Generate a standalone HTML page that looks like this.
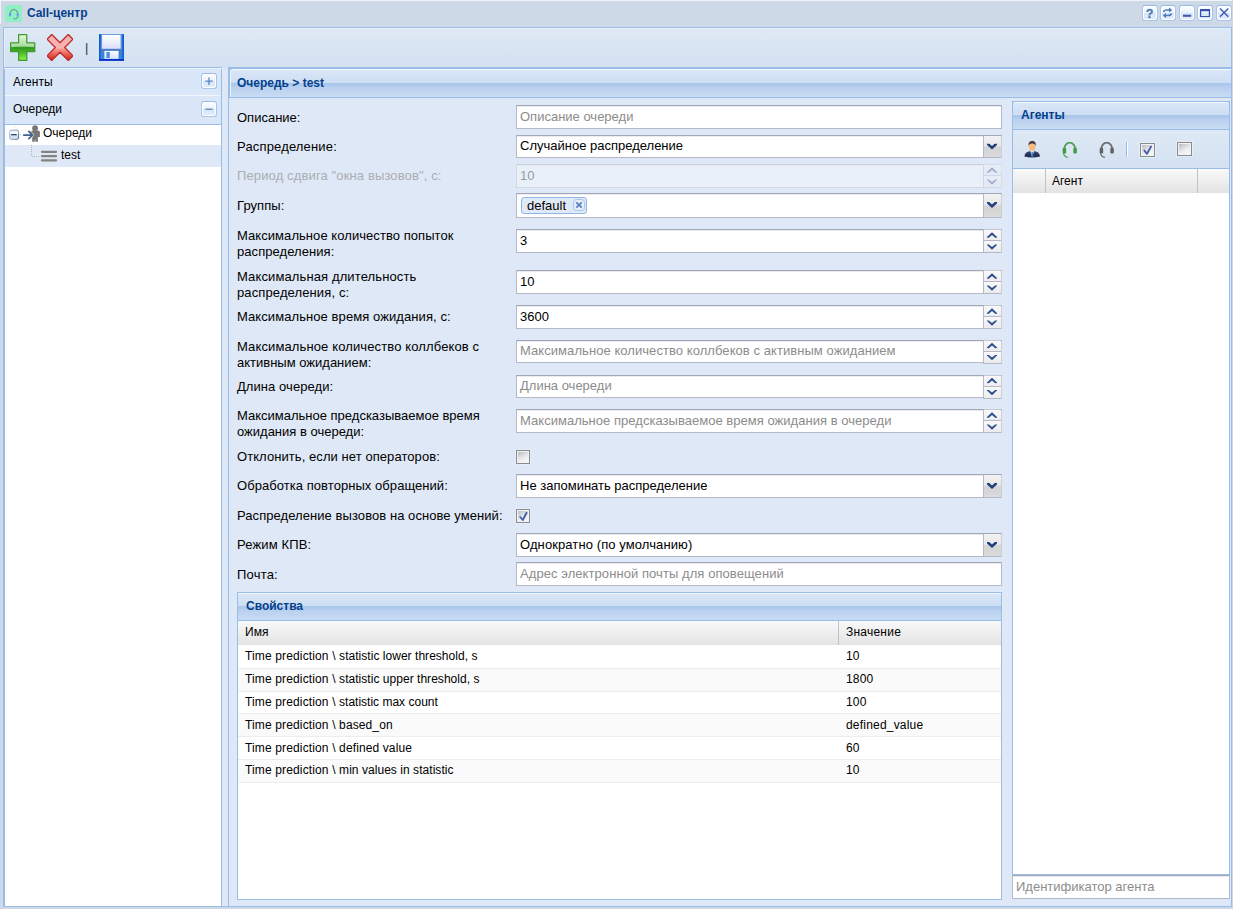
<!DOCTYPE html>
<html><head><meta charset="utf-8"><title>Call-центр</title>
<style>
*{box-sizing:border-box}
html,body{margin:0;padding:0}
body{width:1233px;height:909px;overflow:hidden;position:relative;background:#ced9e7;font:13px/15px "Liberation Sans",Arial,sans-serif;color:#000}
.a{position:absolute}
.t{position:absolute;white-space:nowrap;line-height:15px}
.hd{position:absolute;border:1px solid #99bce8;background:linear-gradient(#dae7f6 0,#cddef3 13px,#abc7ec 13px,#adc8ec 15px,#b8cfee 17px,#c9dcf3 100%);background-clip:padding-box;background-origin:padding-box;box-shadow:inset 0 1px 0 #f4f8fd}
.hd span{position:absolute;font:bold 12px/15px "Liberation Sans",Arial,sans-serif;color:#04408c;white-space:nowrap}
.lbl{position:absolute;left:237px;width:280px;line-height:16px;white-space:nowrap}
.f{position:absolute;left:516px;width:486px;height:24px;border:1px solid #b5b8c8;border-top-color:#a1a6b9;background:#fff;box-shadow:inset 0 1px 0 #ececf0}
.f span{position:absolute;left:3px;top:3px;line-height:15px;white-space:nowrap}
.ph span{color:#8c8c8c}
.trg{position:absolute;right:-1px;top:-1px;bottom:-1px;width:19px;border:1px solid;border-color:#a1a6b9 #cdced6 #b5b8c8 #b5b8c8;border-radius:0 2px 0 0;background:linear-gradient(#f3f3f3 0,#e7e7e7 47%,#d3d3d3 53%,#dbdbdb 100%)}
.h23 .spn{bottom:-2px}
.gh{position:absolute;background:linear-gradient(#f9f9f9,#e4e3e4)}
.row{position:absolute;left:238px;width:763px;height:23px;border-top:1px solid #ededed;font-size:12px}
.row span{position:absolute;top:3px;line-height:15px;white-space:nowrap}
.alt{background:#fafafa}
.tool{position:absolute;width:15px;height:15px;border:1px solid #a9c4ea;border-top-color:#98b9e6;border-radius:3px;background:linear-gradient(#fdfeff,#eaf2fc 48%,#d6e5f9 52%,#e4eefb);box-shadow:inset 0 0 0 1px #fff}

.trg svg{position:absolute;left:0;top:0}
.cb{position:absolute;width:14px;height:14px;border:1px solid #8b8b8b;background:linear-gradient(150deg,#bfc3cb 15%,#ececee 55%,#f6f6f6 85%);box-shadow:inset 0 0 0 1px #f3f3f3,0 0 0 1px rgba(226,238,253,.9)}
.tool svg{position:absolute;left:-1px;top:-1px}
.h23{height:23px}.h23 span{top:2px}
.spn{background:linear-gradient(#f9f9f9,#ececec 50%,#f9f9f9 50%,#ebebeb);border-top-color:#c6c8d2}.spn i{position:absolute;left:0;right:0;top:10px;height:1px;background:#b5b8c8}
.row b{font-weight:normal;letter-spacing:.14px}.row i{font-style:normal}
.r1 span{top:4px}
</style></head><body>
<svg width="0" height="0" style="position:absolute">
<defs>
<linearGradient id="gPlus" x1="0" y1="0" x2="0" y2="1"><stop offset="0" stop-color="#d9f2d4"/><stop offset=".47" stop-color="#86cc78"/><stop offset=".5" stop-color="#2f9620"/><stop offset=".75" stop-color="#56c233"/><stop offset="1" stop-color="#8cf54e"/></linearGradient>
<linearGradient id="gX" x1="0" y1="0" x2="0" y2="1"><stop offset="0" stop-color="#f0b4b4"/><stop offset=".5" stop-color="#fab2ae"/><stop offset=".62" stop-color="#f48a80"/><stop offset="1" stop-color="#d21f10"/></linearGradient>
<linearGradient id="gSv" x1="0" y1="0" x2="0" y2="1"><stop offset="0" stop-color="#1a6fe0"/><stop offset=".5" stop-color="#4a7cc6"/><stop offset="1" stop-color="#2a8ae8"/></linearGradient>
<linearGradient id="gSvL" x1="0" y1="0" x2="0" y2="1"><stop offset="0" stop-color="#ffffff"/><stop offset="1" stop-color="#dadffb"/></linearGradient>
<symbol id="chev2" viewBox="0 0 10 6"><path d="M0 0.4 L1.8 0.4 L5 3.1 L8.2 0.4 L10 0.4 L10 1.1 L5 5.8 L0 1.1 Z"/></symbol>
<symbol id="chev" viewBox="0 0 10 6"><path d="M0 0 L2.2 0 L5 2.6 L7.8 0 L10 0 L10 1.5 L5 6 L0 1.5 Z"/></symbol>
<symbol id="hs" viewBox="0 0 16 17"><path d="M2.3 8 A5.7 6.9 0 0 1 13.7 8" fill="none" stroke-width="1.9" stroke="currentColor" opacity=".9"/><rect x=".7" y="6.4" width="3.6" height="6" rx="1.3" fill="currentColor"/><rect x="11.7" y="6.4" width="3.6" height="6" rx="1.3" fill="currentColor"/><path d="M1.6 11.8 Q2 15.4 5.6 16.3" fill="none" stroke="currentColor" stroke-width="1.3" stroke-linecap="round" opacity=".9"/><rect x="4.8" y="8.6" width="6.4" height="4.4" fill="#e8ecf0" opacity=".5"/></symbol>
</defs></svg>

<!-- window header -->
<div class="a" style="left:0;top:0;width:1232px;height:1px;background:#f1f4fa"></div>
<div class="a" style="left:0;top:0;width:1px;height:24px;background:#f1f4fa"></div>
<svg class="a" style="left:5px;top:5px" width="17" height="17" viewBox="0 0 17 17"><rect width="17" height="17" rx="3" fill="#8ff0c2"/><path d="M5.2 9 A3.6 4.2 0 0 1 12.6 9" fill="none" stroke="#6f7f86" stroke-width="1"/><rect x="3.9" y="8" width="2.3" height="3.6" rx="1" fill="#6a9cf2"/><rect x="11.6" y="8" width="2.3" height="3.6" rx="1" fill="#6a9cf2"/><path d="M12.8 11.4 Q12.6 13.6 10.2 13.8" fill="none" stroke="#6f7f86" stroke-width=".9"/><rect x="8.2" y="13.2" width="2" height="1.1" rx=".5" fill="#4f8ff0"/></svg>
<div class="t" style="left:27px;top:6px;font:bold 12px/15px 'Liberation Sans',Arial,sans-serif;color:#04408c">Call-центр</div>
<div class="tool" style="left:1142px;top:5px;height:16px;width:16px"><svg width="15" height="15" viewBox="0 0 15 15"><text x="7.5" y="12.8" text-anchor="middle" font-family="'Liberation Sans',Arial,sans-serif" font-weight="bold" font-size="12.5" fill="#4a79b3" stroke="#4a79b3" stroke-width=".3">?</text></svg></div>
<div class="tool" style="left:1160px;top:5px;height:16px;width:16px"><svg width="15" height="15" viewBox="0 0 15 15"><g fill="none" stroke="#4a79b3" stroke-width="1.5"><path d="M3.5 7 Q4 5 7 5 H9.5"/><path d="M11.5 8.5 Q11 10.5 8 10.5 H5.5"/></g><path d="M9 2.4 L12.2 5 L9 7.6 Z" fill="#4a79b3"/><path d="M6 7.9 L2.8 10.5 L6 13.1 Z" fill="#4a79b3"/></svg></div>
<div class="tool" style="left:1179px;top:5px;height:16px;width:16px"><svg width="15" height="15" viewBox="0 0 15 15"><rect x="4" y="9.7" width="8.2" height="2.1" fill="#4357a8"/></svg></div>
<div class="tool" style="left:1197px;top:5px;height:16px;width:16px"><svg width="15" height="15" viewBox="0 0 15 15"><path d="M3 4 H13 V12 H3 Z M4.2 6.2 V10.9 H11.8 V6.2 Z" fill="#3850aa" fill-rule="evenodd"/></svg></div>
<div class="tool" style="left:1216px;top:5px;height:16px;width:16px"><svg width="15" height="15" viewBox="0 0 15 15"><path d="M4 3.6 L12.3 11.8 M12.3 3.6 L4 11.8" stroke="#4357a8" stroke-width="1.35" fill="none"/></svg></div>

<!-- window body -->
<div class="a" style="left:3px;top:27px;width:1229px;height:880px;border:1px solid #99bce8;background:#dfe8f6"></div>
<!-- toolbar -->
<div class="a" style="left:3px;top:27px;width:1229px;height:41px;border:1px solid #99bce8;background:linear-gradient(#dfe9f5,#d3e1f1);box-shadow:inset 1px 1px 0 #e8eef8"></div>
<div class="a" style="left:4px;top:68px;width:1227px;height:1px;background:#eef3fb"></div>
<div class="t" style="left:85px;top:40px;font-size:13px;color:#333">|</div>


<!-- toolbar icons -->
<svg class="a" style="left:9px;top:33px" width="28" height="29" viewBox="0 0 28 29">
<path d="M9.6 1.7 H17.8 V9.8 H25.8 V18.6 H17.8 V27.4 H9.6 V18.6 H1.6 V9.8 H9.6 Z" fill="url(#gPlus)" stroke="#3d9a2c" stroke-width="1.2" stroke-linejoin="round"/>
<path d="M2.4 10.6 H10.4 V2.6 H17 V10.6 H25 V14.2 Q13.7 10.6 2.4 14.6 Z" fill="#fff" opacity=".28"/>
</svg>
<svg class="a" style="left:47px;top:34px" width="26" height="27" viewBox="0 0 26 27">
<path d="M4.73 0.56 L13.00 8.83 L21.27 0.56 L25.94 5.23 L17.67 13.50 L25.94 21.77 L21.27 26.44 L13.00 18.17 L4.73 26.44 L0.06 21.77 L8.33 13.50 L0.06 5.23 Z" fill="url(#gX)" stroke="#c12a2c" stroke-width="1.3" stroke-linejoin="round"/>
</svg>
<svg class="a" style="left:98px;top:33px" width="28" height="29" viewBox="0 0 28 29">
<rect x="1" y="1.2" width="25" height="26.6" fill="url(#gSv)"/>
<rect x="1" y="1.2" width="1.6" height="26.6" fill="#0f5fd6"/><rect x="24.4" y="1.2" width="1.6" height="26.6" fill="#0f5fd6"/>
<rect x="1" y="26" width="25" height="1.8" fill="#0a2fc4"/>
<rect x="4" y="1.8" width="18.8" height="14" fill="url(#gSvL)"/>
<rect x="3.2" y="1.8" width=".9" height="14" fill="#7aa0dc"/><rect x="22.7" y="1.8" width=".9" height="14" fill="#7aa0dc"/>
<rect x="6.4" y="17.9" width="14.2" height="8" fill="url(#gSvL)"/>
<rect x="8.4" y="19" width="3.4" height="6" fill="#4a8fe0"/>
</svg>

<!-- left accordion -->
<div class="a" style="left:4px;top:69px;width:218px;height:837px;border:1px solid #99bce8;border-top:0;border-bottom:0;background:#fff"></div>
<div class="a" style="left:5px;top:69px;width:216px;height:26px;background:#d9e7f8"></div>
<div class="a" style="left:5px;top:95px;width:216px;height:1px;background:#f3f7fb"></div>
<div class="a" style="left:5px;top:96px;width:216px;height:28px;background:#d9e7f8"></div>
<div class="a" style="left:5px;top:124px;width:216px;height:1px;background:#99bce8"></div>
<div class="t" style="left:13px;top:75px;font-size:12px">Агенты</div>
<div class="t" style="left:13px;top:102px;font-size:12px">Очереди</div>
<div class="tool" style="left:201px;top:73px;width:16px;height:16px"><svg width="16" height="16" viewBox="-0.5 -0.5 16 16"><path d="M7.5 4 V11.4 M3.8 7.7 H11.2" stroke="#5a86be" stroke-width="1.3" fill="none"/></svg></div>
<div class="tool" style="left:201px;top:101px;width:16px;height:16px"><svg width="16" height="16" viewBox="-0.5 -0.5 16 16"><path d="M3.8 7.7 H11.2" stroke="#5a86be" stroke-width="1.3" fill="none"/></svg></div>
<!-- tree -->
<div class="a" style="left:5px;top:145px;width:216px;height:22px;background:#dfe8f6"></div>
<svg class="a" style="left:5px;top:125px" width="60" height="42" viewBox="5 125 60 42">
<defs><linearGradient id="gEx" x1="0" y1="0" x2="0" y2="1"><stop offset="0" stop-color="#d5dff0"/><stop offset=".3" stop-color="#ffffff"/><stop offset=".5" stop-color="#f4f8fe"/><stop offset=".55" stop-color="#cfdcf2"/><stop offset="1" stop-color="#dfe9f8"/></linearGradient>
<linearGradient id="gExB" x1="0" y1="0" x2="1" y2="1"><stop offset="0" stop-color="#b9c8e0"/><stop offset=".5" stop-color="#9fb3d3"/><stop offset="1" stop-color="#4f6a90"/></linearGradient></defs>
<path d="M14.5 125 V129" stroke="#e2e2e2" stroke-width="1" stroke-dasharray="1 1"/>
<rect x="9.7" y="130.1" width="8.8" height="9.2" rx="1.8" fill="url(#gEx)" stroke="url(#gExB)" stroke-width="1.1"/>
<rect x="11" y="133.9" width="5.8" height="1.4" rx=".5" fill="#2c4466"/>
<rect x="20" y="134.2" width="1" height="1" fill="#b8b8b8"/>
<path d="M23.1 135.05 H32 M28.4 131 L32.6 135.05 L28.4 139.1" fill="none" stroke="#40648c" stroke-width="1.8"/>
<g fill="#767676"><circle cx="35.05" cy="128.15" r="2.85"/><path d="M32.6 130.6 H38.4 Q39.9 130.8 39.9 132.4 V137 H37.9 V141.8 H35.5 L35.1 138.4 L34.7 141.8 H32.2 V137.6 L34.3 135.05 L32.2 132.6 L31.3 133 V132 Q31.4 130.8 32.6 130.6 Z"/></g>
<path d="M31.5 145 V156.5 H39" fill="none" stroke="#b4b4b4" stroke-width="1" stroke-dasharray="1 1"/>
<g fill="#828282"><rect x="41" y="150.7" width="16" height="2.2" rx=".8"/><rect x="41" y="155" width="16" height="2.2" rx=".8"/><rect x="41" y="159.3" width="16" height="2.2" rx=".8"/></g>
</svg>
<div class="t" style="left:43px;top:126px;font-size:12px">Очереди</div>
<div class="t" style="left:61px;top:148px;font-size:12px">test</div>

<!-- main panel -->
<div class="a" style="left:228px;top:68px;width:1003px;height:839px;border:1px solid #99bce8;border-right:0;background:#dfe8f6"></div>
<div class="a" style="left:222px;top:67px;width:6px;height:2px;background:#d9e5f4"></div>
<div class="hd" style="left:228px;top:68px;width:1003px;height:30px;border-radius:4px 0 0 0;border-right:0;box-shadow:inset 1px 0 0 #99bce8,inset 2px 0 0 #edf3fb,inset 0 1px 0 #f4f8fd;background-image:linear-gradient(#dae7f6 0,#cddef3 14px,#abc7ec 14px,#adc8ec 16px,#b8cfee 18px,#c9dcf3 100%)"><span style="left:8px;top:7px">Очередь &gt; test</span></div>

<!-- form labels -->
<div class="lbl" style="top:110px">Описание:</div>
<div class="lbl" style="top:139px;letter-spacing:.16px">Распределение:</div>
<div class="lbl" style="top:168px;color:#a9adb5;letter-spacing:.13px">Период сдвига "окна вызовов", с:</div>
<div class="lbl" style="top:198px;letter-spacing:.07px">Группы:</div>
<div class="lbl" style="top:228px;letter-spacing:.06px">Максимальное количество попыток<br>распределения:</div>
<div class="lbl" style="top:269px;letter-spacing:.12px">Максимальная длительность<br>распределения, с:</div>
<div class="lbl" style="top:309px;letter-spacing:.08px">Максимальное время ожидания, с:</div>
<div class="lbl" style="top:339px"><span style="letter-spacing:.125px">Максимальное количество коллбеков с</span><br>активным ожиданием:</div>
<div class="lbl" style="top:379px;letter-spacing:.065px">Длина очереди:</div>
<div class="lbl" style="top:408px">Максимальное предсказываемое время<br>ожидания в очереди:</div>
<div class="lbl" style="top:449px;letter-spacing:.07px">Отклонить, если нет операторов:</div>
<div class="lbl" style="top:478px;letter-spacing:.055px">Обработка повторных обращений:</div>
<div class="lbl" style="top:508px;letter-spacing:.065px">Распределение вызовов на основе умений:</div>
<div class="lbl" style="top:537px;letter-spacing:.13px">Режим КПВ:</div>
<div class="lbl" style="top:567px;letter-spacing:.2px">Почта:</div>

<!-- fields -->
<div class="f ph" style="top:105px"><span>Описание очереди</span></div>
<div class="f h23" style="top:135px"><span>Случайное распределение</span><div class="trg"><svg width="17" height="21"><use href="#chev" x="3" y="7.5" width="10" height="6" fill="#1f3f7f"/></svg></div></div>
<div class="f" style="top:164px;opacity:.35"><span>10</span><div class="trg spn"><i></i><svg width="17" height="22"><use href="#chev2" x="3" y="-8.1" width="10" height="6" fill="#2b4a8e" transform="scale(1,-1)"/><use href="#chev2" x="3" y="14" width="10" height="6" fill="#2b4a8e"/></svg></div></div>
<div class="f" style="top:193px;height:25px"><div class="a" style="left:4px;top:3px;width:66px;height:17px;border:1px solid #8fb5ea;border-radius:3px;background:#e0e9f6"><span style="left:5px;top:0;line-height:15px">default</span><div class="a" style="left:51px;top:1px;width:12px;height:12px;border:1px solid #a6c4ee;border-radius:3.5px;background:#e6eefa"><svg width="10" height="10" style="position:absolute;left:0;top:0"><path d="M2.3 2.3 L7.7 7.7 M7.7 2.3 L2.3 7.7" stroke="#5f82c2" stroke-width="1.9"/></svg></div></div><div class="trg"><svg width="17" height="22"><use href="#chev" x="3" y="8" width="10" height="6" fill="#1f3f7f"/></svg></div></div>
<div class="f" style="top:229px"><span>3</span><div class="trg spn"><i></i><svg width="17" height="22"><use href="#chev2" x="3" y="-8.1" width="10" height="6" fill="#2b4a8e" transform="scale(1,-1)"/><use href="#chev2" x="3" y="14" width="10" height="6" fill="#2b4a8e"/></svg></div></div>
<div class="f" style="top:270px"><span>10</span><div class="trg spn"><i></i><svg width="17" height="22"><use href="#chev2" x="3" y="-8.1" width="10" height="6" fill="#2b4a8e" transform="scale(1,-1)"/><use href="#chev2" x="3" y="14" width="10" height="6" fill="#2b4a8e"/></svg></div></div>
<div class="f" style="top:305px"><span>3600</span><div class="trg spn"><i></i><svg width="17" height="22"><use href="#chev2" x="3" y="-8.1" width="10" height="6" fill="#2b4a8e" transform="scale(1,-1)"/><use href="#chev2" x="3" y="14" width="10" height="6" fill="#2b4a8e"/></svg></div></div>
<div class="f ph h23" style="top:340px"><span style="letter-spacing:.063px">Максимальное количество коллбеков с активным ожиданием</span><div class="trg spn"><i></i><svg width="17" height="21"><use href="#chev2" x="3" y="-7.6" width="10" height="6" fill="#2b4a8e" transform="scale(1,-1)"/><use href="#chev2" x="3" y="13.5" width="10" height="6" fill="#2b4a8e"/></svg></div></div>
<div class="f ph h23" style="top:375px"><span>Длина очереди</span><div class="trg spn"><i></i><svg width="17" height="21"><use href="#chev2" x="3" y="-7.6" width="10" height="6" fill="#2b4a8e" transform="scale(1,-1)"/><use href="#chev2" x="3" y="13.5" width="10" height="6" fill="#2b4a8e"/></svg></div></div>
<div class="f ph" style="top:409px"><span style="letter-spacing:.03px">Максимальное предсказываемое время ожидания в очереди</span><div class="trg spn"><i></i><svg width="17" height="22"><use href="#chev2" x="3" y="-8.1" width="10" height="6" fill="#2b4a8e" transform="scale(1,-1)"/><use href="#chev2" x="3" y="14" width="10" height="6" fill="#2b4a8e"/></svg></div></div>
<div class="f" style="top:474px"><span>Не запоминать распределение</span><div class="trg"><svg width="17" height="22"><use href="#chev" x="3" y="8" width="10" height="6" fill="#1f3f7f"/></svg></div></div>
<div class="f" style="top:533px"><span style="letter-spacing:.095px">Однократно (по умолчанию)</span><div class="trg"><svg width="17" height="22"><use href="#chev" x="3" y="8" width="10" height="6" fill="#1f3f7f"/></svg></div></div>
<div class="f ph" style="top:562px"><span style="letter-spacing:.07px">Адрес электронной почты для оповещений</span></div>

<div class="cb" style="left:516px;top:450px"></div>
<div class="cb" style="left:516px;top:509px"><svg width="12" height="12" style="position:absolute;left:0;top:0"><path d="M3.2 7 L5.8 10 L9.6 2.8" fill="none" stroke="#4460aa" stroke-width="1.9" stroke-linecap="round" stroke-linejoin="round"/></svg></div>
<!-- properties -->
<div class="a" style="left:237px;top:592px;width:765px;height:308px;border:1px solid #99bce8;background:#fff"></div>
<div class="hd" style="left:237px;top:592px;width:765px;height:29px"><span style="left:8px;top:6px">Свойства</span></div>
<div class="gh" style="left:238px;top:621px;width:763px;height:24px"></div>
<div class="a" style="left:838px;top:621px;width:2px;height:24px;background:linear-gradient(90deg,#c2c2c2 50%,transparent 50%)"></div>
<div class="t" style="left:245px;top:625px;font-size:12px">Имя</div>
<div class="t" style="left:846px;top:625px;font-size:12px;letter-spacing:.23px">Значение</div>
<div class="row" style="top:645px;border-top-color:transparent"><span style="left:7px"><b>Time prediction \ </b><i style="letter-spacing:0.035px">statistic lower threshold, s</i></span><span style="left:608px;letter-spacing:.2px">10</span></div>
<div class="row alt" style="top:668px"><span style="left:7px"><b>Time prediction \ </b><i style="letter-spacing:0.035px">statistic upper threshold, s</i></span><span style="left:608px;letter-spacing:.2px">1800</span></div>
<div class="row" style="top:691px"><span style="left:7px"><b>Time prediction \ </b><i style="letter-spacing:0px">statistic max count</i></span><span style="left:608px;letter-spacing:.2px">100</span></div>
<div class="row alt r1" style="top:713px;height:24px"><span style="left:7px"><b>Time prediction \ </b><i style="letter-spacing:0.11px">based_on</i></span><span style="left:608px;letter-spacing:.2px">defined_value</span></div>
<div class="row r1" style="top:736px"><span style="left:7px"><b>Time prediction \ </b><i style="letter-spacing:0.115px">defined value</i></span><span style="left:608px;letter-spacing:.2px">60</span></div>
<div class="row alt" style="top:759px;border-bottom:1px solid #ededed;height:24px"><span style="left:7px"><b>Time prediction \ </b><i style="letter-spacing:0.045px">min values in statistic</i></span><span style="left:608px;letter-spacing:.2px">10</span></div>

<!-- agents panel -->
<div class="a" style="left:1012px;top:101px;width:218px;height:774px;border:1px solid #99bce8;background:#fff"></div>
<div class="hd" style="left:1012px;top:101px;width:218px;height:29px;border-radius:3px 3px 0 0"><span style="left:8px;top:6px">Агенты</span></div>
<div class="a" style="left:1013px;top:130px;width:216px;height:39px;background:linear-gradient(#dfe9f5,#d3e1f1);border-bottom:1px solid #99bce8"></div>
<svg class="a" style="left:1024px;top:140px" width="17" height="18" viewBox="0 0 17 18">
<defs><linearGradient id="gSuit" x1="0" y1="0" x2="0" y2="1"><stop offset="0" stop-color="#3b4675"/><stop offset="1" stop-color="#1d2548"/></linearGradient></defs>
<path d="M.4 16.6 Q.6 12.2 5.4 11.2 L8.2 11 L11 11.2 Q15.8 12.2 16 16.6 Q8 18.6 .4 16.6 Z" fill="url(#gSuit)"/>
<path d="M6.4 11 L8.2 17.4 L10 11 Z" fill="#f4f6fa"/><path d="M7.6 11.8 H8.8 L9.2 16.4 L8.2 17.4 L7.2 16.4 Z" fill="#2f7fd0"/>
<ellipse cx="8.2" cy="6.6" rx="3.4" ry="4.4" fill="#f6bb80"/>
<path d="M4.6 6.2 Q4 1 8.2 .8 Q12.4 1 11.8 6.2 Q11.2 3.6 8.2 3.6 Q5.2 3.6 4.6 6.2 Z" fill="#4a3b47"/>
</svg>
<svg class="a" style="left:1062px;top:140.5px;color:#2e8f2e;opacity:.88" width="15.5" height="17.5" viewBox="0 0 16 17"><use href="#hs"/></svg>
<svg class="a" style="left:1099px;top:140.5px;color:#4c4c4c;opacity:.85" width="15.5" height="17.5" viewBox="0 0 16 17"><use href="#hs"/></svg>
<div class="a" style="left:1126px;top:142px;width:1px;height:15px;background:#8cbcf8"></div>
<div class="a" style="left:1127px;top:142px;width:1px;height:15px;background:#fff"></div>
<div class="cb" style="left:1140px;top:143px;width:15px"><svg width="13" height="12" style="position:absolute;left:0;top:0"><path d="M3.4 6.6 L6 9.8 L10 2.6" fill="none" stroke="#4460aa" stroke-width="1.9" stroke-linecap="round" stroke-linejoin="round"/></svg></div>
<div class="cb" style="left:1177px;top:142px;width:15px"></div>
<div class="gh" style="left:1013px;top:169px;width:216px;height:24px"></div>
<div class="a" style="left:1045px;top:169px;width:2px;height:24px;background:linear-gradient(90deg,#c2c2c2 50%,transparent 50%)"></div>
<div class="a" style="left:1197px;top:169px;width:2px;height:24px;background:linear-gradient(90deg,#c2c2c2 50%,transparent 50%)"></div>
<div class="t" style="left:1052px;top:174px;font-size:12px">Агент</div>
<div class="f ph" style="left:1012px;top:875px;width:218px"><span>Идентификатор агента</span></div>
</body></html>
